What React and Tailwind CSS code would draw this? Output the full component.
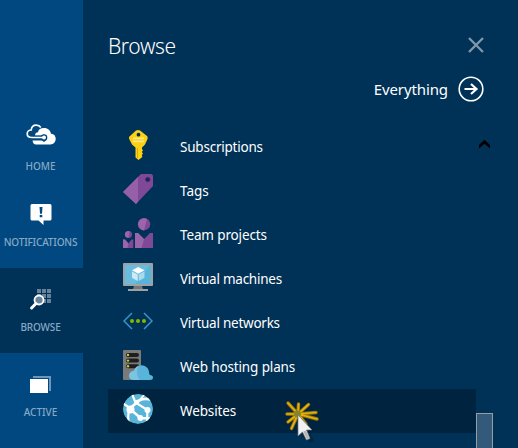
import React from 'react';

const CloudIcon = () => (
  <svg width="30" height="21" viewBox="0 0 30 21" fill="none">
    <path d="M10 20.500C8 20.500 6.800 19 6.500 16.500H16L18 18L20.500 16V12L18 10.500L16 11.500H9C9 9.500 10 8.500 12 8.300C12.300 5.500 14.500 4 18 4C22 4 24.500 6.500 25 9.700C28.300 10 29.700 12 29.700 14.800C29.700 18 27.500 20.500 24.500 20.500Z" fill="#fff" />
    <path d="M16 11.700H6V15.500H16Z" fill="#00487f" />
    <circle cx="18" cy="13.500" r="3.300" fill="#00487f" />
    <path d="M17 13.500H6C3 13.500 1.200 11.900 1.200 9.700C1.200 7.500 3 6 5.200 6C5.500 3 7.500 1.200 10.200 1.200C12.500 1.200 14 2.200 14.800 3.500" stroke="#fff" strokeWidth="1.700" />
    <circle cx="18" cy="13.500" r="2" fill="#fff" />
  </svg>
);

const NoticeIcon = () => (
  <svg width="22" height="22" viewBox="0 0 22 22">
    <path d="M2 0H20Q21.500 0 21.500 1.500V15Q21.500 16.500 20 16.500H13.500V21L8.500 16.500H2Q.5 16.500 .5 15V1.500Q.5 0 2 0Z" fill="#fff" />
    <path d="M9.500 3H12.500L12 9.800H10Z M9.700 11H12.300V13.300H9.700Z" fill="#00487f" />
  </svg>
);

const SearchGridIcon = () => (
  <svg width="22" height="22" viewBox="0 0 22 22">
    <path d="M7 1h4v4H7zM12 1h4v4h-4zM17 1h4v4h-4zM7 6h4v4H7zM12 6h4v4h-4zM17 6h4v4h-4zM12 11h4v4h-4zM17 11h4v4h-4z" fill="#66839b" />
    <circle cx="9" cy="12" r="4.500" fill="#66839b" stroke="#fff" strokeWidth="1.800" />
    <path d="M6 15.500L1.600 20" stroke="#fff" strokeWidth="3" strokeLinecap="round" />
  </svg>
);

const WindowsIcon = () => (
  <svg width="22" height="18" viewBox="0 0 22 18">
    <path d="M3 1H20V15" fill="none" stroke="#6d96b8" strokeWidth="2" />
    <path d="M0 3H18V17H0Z" fill="#fff" />
  </svg>
);

const KeyIcon = () => (
  <svg width="30" height="30" viewBox="0 0 30 30">
    <path fillRule="evenodd" d="M13 .6Q15 -.5 17 .6L24 6Q25 7 24.500 9L22 14.500L19 17.500V19L20 20.500L18.800 22L20 23.500L18.800 25L19.300 27L15.500 30L12.500 27.500V17.500L9 14.500L6.200 9Q5.500 7 7 6ZM15.500 2.800A1.900 1.900 0 1 0 15.500 6.600A1.900 1.900 0 1 0 15.500 2.800Z" fill="#fcd116" />
    <path d="M10 8.300H21M10 11.300H21" stroke="#fee87f" strokeWidth="1.700" />
    <path d="M14.500 18V28" stroke="#dfaa00" />
  </svg>
);

const TagIcon = () => (
  <svg width="30" height="30" viewBox="0 0 30 30">
    <path d="M18 0H28Q30 .3 30 2V12L13 30L0 18Z" fill="#804998" />
    <path d="M18 0L0 18L13 30L15 27.800V3Z" fill="#9560a7" />
    <circle cx="24.800" cy="5.500" r="2.300" fill="#003157" stroke="#68217a" />
  </svg>
);

const TeamIcon = () => (
  <svg width="30" height="30" viewBox="0 0 30 30">
    <circle cx="21" cy="6.200" r="6.200" fill="#804998" />
    <path d="M17 2A6.200 6.200 0 0 0 21 12.400L24 1Q20 -1 17 2Z" fill="#9b65ac" />
    <circle cx="5.500" cy="16.500" r="3.500" fill="#804998" />
    <path d="M6.500 13.200A3.500 3.500 0 1 0 5.500 20Z" fill="#9b65ac" />
    <path d="M12 15H15L21 21L27 15H30V30H12ZM0 21.500H2L5.500 25.500L8.500 21.500H10.300V30H0Z" fill="#804998" />
    <path d="M12 15H15L21 21L18.500 30H12ZM0 21.500H2L5.500 25.500L4.500 30H0Z" fill="#9b65ac" />
  </svg>
);

const VmIcon = () => (
  <svg width="30" height="30" viewBox="0 0 30 30">
    <rect y="1" width="30" height="23" rx="1" fill="#a0a1a2" />
    <path d="M2 3H28V22H2Z" fill="#59b4d9" />
    <path d="M2 3H27L12 22H2Z" fill="#69bcdd" />
    <path d="M11 24H19L20 27H10Z" fill="#77787a" />
    <path d="M5 27H25V29H5Z" fill="#a0a1a2" />
    <path d="M15.200 5L21.500 8.300L15.200 11.700L9 8.300Z" fill="#fff" />
    <path d="M9 9.400L14.700 12.500V19L9 15.800Z" fill="#cdebf7" />
    <path d="M21.500 9.400L15.800 12.500V19L21.500 15.800Z" fill="#a9daee" />
  </svg>
);

const NetworkIcon = () => (
  <svg width="30" height="30" viewBox="0 0 30 30">
    <path d="M9 7L1 15L9 23M21 7L29 15L21 23" fill="none" stroke="#3795c9" strokeWidth="1.500" />
    <g fill="#7fba00"><circle cx="9" cy="15" r="2" /><circle cx="15" cy="15" r="2" /><circle cx="21" cy="15" r="2" /></g>
  </svg>
);

const HostingIcon = () => (
  <svg width="30" height="30" viewBox="0 0 30 30">
    <rect width="18" height="30" rx="1" fill="#7a7a7a" />
    <path d="M5 4.900H14M5 10.600H14M5 16.300H14" stroke="#1e1e1e" strokeWidth="4" strokeLinecap="round" />
    <g fill="#b8d432"><circle cx="5" cy="4.900" r="1.200" /><circle cx="5" cy="10.600" r="1.200" /><circle cx="5" cy="16.300" r="1.200" /></g>
    <path d="M10.500 30Q6 29.500 6 25.500Q6.500 21.500 11 20.800Q12.500 15.500 18.500 15.300Q24.500 15.500 26 21.500Q26 24 27 25Q30 25.500 30 27.500Q30 30 27 30Z" fill="#59b4d9" />
    <path d="M10.500 30Q6 29.500 6 25.500Q6.500 21.500 11 20.800Q12.300 17 16 15.800Q11.500 22 16.500 30Z" fill="#7ac3e1" />
  </svg>
);

const WebsiteIcon = () => (
  <svg width="30" height="30" viewBox="0 0 30 30">
    <defs><clipPath id="globe"><circle cx="15" cy="15" r="15" /></clipPath></defs>
    <g clipPath="url(#globe)" fill="none" stroke="#fff">
      <circle cx="15" cy="15" r="15" fill="#59b4d9" stroke="none" />
      <path d="M6.500 15L16 6.500Q21 4 28 5.500" strokeWidth="2.700" />
      <path d="M9 0L12.500 8.500L24.500 16L24 27" strokeWidth="2.200" />
      <path d="M7 15L17.500 24L27 24.500" strokeWidth="2.500" />
      <path d="M0 9.500L7 14Q4 20 6 30" strokeWidth="2.200" />
      <path d="M17 5.500L22 0" strokeWidth="1.800" />
      <circle cx="7.500" cy="15.500" r="4" fill="#fff" stroke="none" />
      <circle cx="24.500" cy="16" r="3" fill="#fff" stroke="none" />
      <circle cx="17.300" cy="24" r="2.900" fill="#fff" stroke="none" />
      <circle cx="14" cy="8" r="2.300" fill="#fff" stroke="none" />
    </g>
  </svg>
);

const nav = [
  { label: 'HOME', Icon: CloudIcon, cell: 'h-[75px] pt-px', icon: 'h-[35px]', text: '' },
  { label: 'NOTIFICATIONS', Icon: NoticeIcon, cell: 'h-[70px] pt-[6px]', icon: 'h-[31px]', text: 'tracking-[-0.17px]' },
  { label: 'BROWSE', Icon: SearchGridIcon, cell: 'h-[85px] bg-[#003157] pt-5', icon: 'h-8', text: 'tracking-[-0.15px]' },
  { label: 'ACTIVE', Icon: WindowsIcon, cell: 'h-[95px] pt-[23px]', icon: 'h-[29px]', text: '' },
];

const items = [
  { label: 'Subscriptions', Icon: KeyIcon, text: 'tracking-[-0.22px]' },
  { label: 'Tags', Icon: TagIcon, text: '' },
  { label: 'Team projects', Icon: TeamIcon, text: 'tracking-[-0.13px]' },
  { label: 'Virtual machines', Icon: VmIcon, text: 'tracking-[-0.25px]' },
  { label: 'Virtual networks', Icon: NetworkIcon, text: 'tracking-[-0.25px]' },
  { label: 'Web hosting plans', Icon: HostingIcon, text: 'tracking-[-0.13px]' },
  { label: 'Websites', Icon: WebsiteIcon, text: 'tracking-[-0.13px]', selected: true },
];

const Pointer = () => (
  <svg className="pointer-events-none absolute top-[396px] left-[280px]" width="50" height="52" viewBox="0 0 50 52">
    <path d="M18 18L8 7M18 18L18.500 8M18 18L28.500 8.500M18 18L7 18M18 18L8 26M18 18L11.500 32.500M18 18L36 16.500M18 18L37 23M18 18L26 28" stroke="#9b7608" strokeWidth="3.400" strokeLinecap="round" />
    <path d="M18 18L8 7M18 18L18.500 8M18 18L28.500 8.500M18 18L7 18M18 18L8 26M18 18L11.500 32.500M18 18L36 16.500M18 18L37 23M18 18L26 28" stroke="#e3b20c" strokeWidth="1.700" strokeLinecap="round" />
    <circle cx="17.500" cy="18" r="3.500" fill="#84852b" />
    <path d="M21 22V43L25.500 38.500L30 47L34 45L30 36.500H35Z" fill="#001a2d" opacity=".4" />
    <path d="M18 19V40L22.500 36L26.500 44L30 42.500L26.500 34H32Z" fill="#f2f2f2" stroke="#777" strokeWidth=".7" />
    <path d="M23.300 35.500L27 43.300L29.300 42.300L26 34.500Z" fill="#b5b5b5" />
  </svg>
);

export default function App() {
  return (
    <div className="relative flex h-[448px] w-[518px] overflow-hidden bg-[#003157] font-['Noto_Sans','Open_Sans',sans-serif] text-white">
      <nav className="flex w-[83px] shrink-0 flex-col bg-[#00487f] pt-[123px]">
        {nav.map(({ label, Icon, cell, icon, text }) => (
          <div key={label} className={`flex shrink-0 flex-col items-center pr-[2px] ${cell}`}>
            <div className={`shrink-0 ${icon}`}><Icon /></div>
            <span className={`text-[10px] leading-[14px] font-medium whitespace-nowrap text-[#85a9c6] ${text}`}>{label}</span>
          </div>
        ))}
      </nav>
      <main className="flex min-w-0 flex-1 flex-col pl-[25px]">
        <header className="flex h-[68px] shrink-0 items-start justify-between pt-[31px] pr-[33px]">
          <h1 className="text-[21px] leading-[30px] font-light tracking-[-0.4px]">Browse</h1>
          <svg className="mt-[5px]" width="18" height="18" viewBox="0 0 18 18"><path d="M2 2L16 16M16 2L2 16" stroke="#8198ab" strokeWidth="2.300" /></svg>
        </header>
        <div className="flex h-[57px] shrink-0 items-start justify-end gap-[10px] pt-[8px] pr-[34px]">
          <span className="text-[15px] leading-[26px] tracking-[-0.1px]">Everything</span>
          <svg width="26" height="26" viewBox="0 0 26 26" fill="none" stroke="#fff">
            <circle cx="13" cy="13" r="11.800" strokeWidth="1.600" />
            <path d="M6.500 13H18M13 8L18.500 13L13 18" strokeWidth="2.200" />
          </svg>
        </div>
        <div className="flex min-h-0 flex-1">
          <ul className="w-[368px] shrink-0">
            {items.map(({ label, Icon, text, selected }) => (
              <li key={label} className={`flex h-11 items-center pl-[15px] ${selected ? 'bg-[#00243f]' : ''}`}>
                <div className="mb-1 h-[30px] w-[57px]"><Icon /></div>
                <span className={`text-[13.5px] leading-5 whitespace-nowrap ${text}`}>{label}</span>
              </li>
            ))}
          </ul>
          <div className="flex w-[17px] flex-col justify-between pt-[14px]">
            <svg className="ml-[2px]" width="13" height="11" viewBox="0 0 13 11"><path d="M1 9.500V6L6.500 .8L12 6V9.500L6.500 4.800Z" fill="#000" /></svg>
            <div className="h-[35px] border border-b-0 border-[#999da1] bg-[#335a7a]" />
          </div>
        </div>
      </main>
      <Pointer />
    </div>
  );
}
